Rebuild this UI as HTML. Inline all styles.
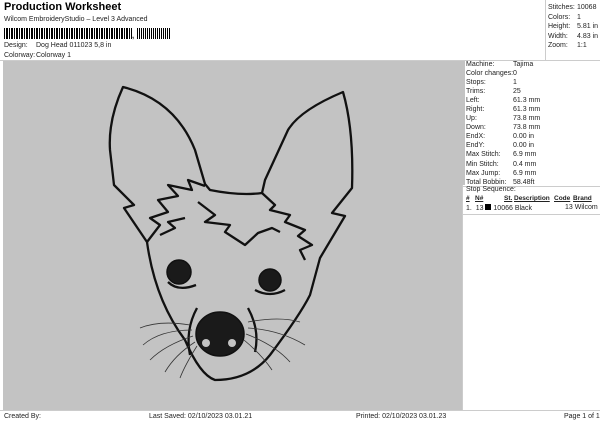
<!DOCTYPE html><html><head><style>
body{margin:0;width:600px;height:424px;background:#fff;font-family:"Liberation Sans",sans-serif;position:relative;overflow:hidden;color:#222}
.a{position:absolute;white-space:nowrap;font-size:7px}
.bc{position:absolute;top:28px;left:4px;height:11px;width:128px;background:repeating-linear-gradient(90deg,#000 0 1px,#fff 1px 2px,#000 2px 4px,#fff 4px 5px)}
.bc2{position:absolute;top:28px;left:137px;height:11px;width:34px;background:repeating-linear-gradient(90deg,#000 0 1px,#fff 1px 2px,#000 2px 3px,#fff 3px 4px)}
</style></head><body>
<div class="a" style="left:4px;top:1px;font-size:11px;font-weight:bold;color:#000">Production Worksheet</div>
<div class="a" style="left:4px;top:16px">Wilcom EmbroideryStudio – Level 3 Advanced</div>
<div class="bc"></div><div class="a" style="left:132px;top:31px;font-weight:bold;font-size:8px">,</div><div class="bc2"></div>
<div class="a" style="left:4px;top:42px">Design:</div><div class="a" style="left:36px;top:42px">Dog Head 011023 5,8 in</div>
<div class="a" style="left:4px;top:52px">Colorway:</div><div class="a" style="left:36px;top:52px">Colorway 1</div>
<div style="position:absolute;left:0;top:60px;width:600px;height:1px;background:#ccc"></div>
<div style="position:absolute;left:545px;top:0;width:1px;height:60px;background:#ccc"></div>
<div class="a" style="left:548px;top:3px;line-height:9.6px">Stitches:<br>Colors:<br>Height:<br>Width:<br>Zoom:</div>
<div class="a" style="left:577px;top:3px;line-height:9.6px">10068<br>1<br>5.81 in<br>4.83 in<br>1:1</div>
<div style="position:absolute;left:3px;top:61px;width:459px;height:349px;background:#c3c3c3"></div>
<div style="position:absolute;left:462px;top:61px;width:3px;height:124px;background:#c3c3c3"></div>
<svg style="position:absolute;left:0;top:0" width="600" height="424">
<g fill="none" stroke="#111" stroke-width="2.3" stroke-linejoin="round">
<path d="M123,87 Q108,120 110,150 L114,185 L134,205 L124,208 L147,242 Q155,300 185,340 Q200,375 215,380 Q250,380 270,355 Q300,315 310,295 L320,258 L345,216 L332,213 L352,188 Q354,130 343,92 Q300,110 288,130 L265,180 L262,193 Q240,196 210,190 L205,184 L195,150 Q175,100 123,87 Z"/>
<path d="M147,242 L160,225 L150,218 L168,212 L158,200 L178,196 L168,185 L192,190 L188,180 L205,186"/>
<path d="M262,193 L275,205 L270,210 L290,215 L285,222 L305,230 L298,236 L312,245 L300,250 L305,260"/>
<path d="M198,202 L215,215 L205,222 L230,225 L225,232 L245,245 L258,233 L272,228 L280,232"/>
<path d="M160,235 L175,228 L168,222 L185,218"/>
<path d="M197,308 Q185,330 190,355"/><path d="M248,308 Q260,330 255,352"/>
<path d="M168,282 Q178,292 196,285"/><path d="M255,290 Q270,298 285,290"/>
</g>
<g fill="#1a1a1a" stroke="#111" stroke-width="1.5"><circle cx="179" cy="272" r="12"/><circle cx="270" cy="280" r="11"/>
<ellipse cx="220" cy="334" rx="24" ry="22"/></g>
<g fill="#c3c3c3"><circle cx="206" cy="343" r="4"/><circle cx="232" cy="343" r="4"/></g>
<g stroke="#333" stroke-width="0.8" fill="none">
<path d="M190,325 Q160,320 140,328"/><path d="M192,330 Q160,330 143,345"/><path d="M193,336 Q165,345 150,360"/><path d="M195,342 Q175,355 165,372"/><path d="M197,346 Q185,365 180,378"/>
<path d="M248,322 Q280,316 300,322"/><path d="M248,328 Q280,330 305,345"/><path d="M246,334 Q275,345 290,362"/><path d="M244,340 Q262,355 272,370"/>
</g>
</svg>
<div style="position:absolute;left:462px;top:185px;width:1px;height:225px;background:#ccc"></div>
<div class="a" style="left:466px;top:60px;line-height:9.05px">Machine:<br>Color changes:<br>Stops:<br>Trims:<br>Left:<br>Right:<br>Up:<br>Down:<br>EndX:<br>EndY:<br>Max Stitch:<br>Min Stitch:<br>Max Jump:<br>Total Bobbin:</div>
<div class="a" style="left:513px;top:60px;line-height:9.05px">Tajima<br>0<br>1<br>25<br>61.3 mm<br>61.3 mm<br>73.8 mm<br>73.8 mm<br>0.00 in<br>0.00 in<br>6.9 mm<br>0.4 mm<br>6.9 mm<br>58.48ft</div>
<div style="position:absolute;left:463px;top:186px;width:137px;height:1px;background:#ccc"></div>
<div class="a" style="left:466px;top:186px">Stop Sequence:</div>
<div class="a" style="left:466px;top:195px;font-size:6.5px;font-weight:bold;text-decoration:underline">#</div>
<div class="a" style="left:475px;top:195px;font-size:6.5px;font-weight:bold;text-decoration:underline">N#</div>
<div class="a" style="left:504px;top:195px;font-size:6.5px;font-weight:bold;text-decoration:underline">St.</div>
<div class="a" style="left:514px;top:195px;font-size:6.5px;font-weight:bold;text-decoration:underline">Description</div>
<div class="a" style="left:554px;top:195px;font-size:6.5px;font-weight:bold;text-decoration:underline">Code</div>
<div class="a" style="left:573px;top:195px;font-size:6.5px;font-weight:bold;text-decoration:underline">Brand</div>
<div class="a" style="left:466px;top:204px">1.&nbsp; 13 <span style="display:inline-block;width:6px;height:6px;background:#000"></span> 10066 Black</div>
<div class="a" style="left:565px;top:204px">13 Wilcom</div>
<div style="position:absolute;left:463px;top:214px;width:137px;height:1px;background:#ccc"></div>
<div style="position:absolute;left:0;top:410px;width:600px;height:1px;background:#ccc"></div>
<div class="a" style="left:4px;top:413px">Created By:</div>
<div class="a" style="left:149px;top:413px">Last Saved: 02/10/2023 03.01.21</div>
<div class="a" style="left:356px;top:413px">Printed: 02/10/2023 03.01.23</div>
<div class="a" style="left:564px;top:413px">Page 1 of 1</div>
</body></html>
